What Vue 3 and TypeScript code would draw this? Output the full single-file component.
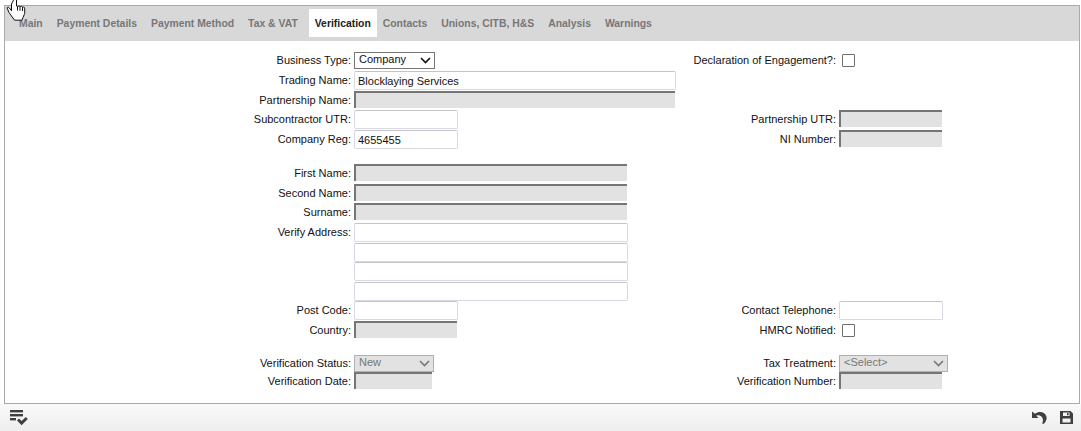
<script setup lang="ts">
type Kind = 'text' | 'off' | 'select' | 'check'

interface Field {
  label?: string
  kind: Kind
  width: number
  value?: string
  disabled?: boolean
}

interface Row {
  height: number
  left?: Field
  right?: Field
}

const tabs = ['Main', 'Payment Details', 'Payment Method', 'Tax & VAT', 'Verification', 'Contacts', 'Unions, CITB, H&S', 'Analysis', 'Warnings']
const activeTab = 'Verification'

const rows: Row[] = [
  {
    height: 19,
    left: { label: 'Business Type', kind: 'select', width: 81, value: 'Company' },
    right: { label: 'Declaration of Engagement?', kind: 'check', width: 13 },
  },
  { height: 20, left: { label: 'Trading Name', kind: 'text', width: 322, value: 'Blocklaying Services' } },
  { height: 19, left: { label: 'Partnership Name', kind: 'off', width: 321 } },
  {
    height: 20,
    left: { label: 'Subcontractor UTR', kind: 'text', width: 104 },
    right: { label: 'Partnership UTR', kind: 'off', width: 103 },
  },
  {
    height: 20,
    left: { label: 'Company Reg', kind: 'text', width: 104, value: '4655455' },
    right: { label: 'NI Number', kind: 'off', width: 103 },
  },
  { height: 14 },
  { height: 20, left: { label: 'First Name', kind: 'off', width: 273 } },
  { height: 19, left: { label: 'Second Name', kind: 'off', width: 273 } },
  { height: 20, left: { label: 'Surname', kind: 'off', width: 273 } },
  { height: 20, left: { label: 'Verify Address', kind: 'text', width: 274 } },
  { height: 19, left: { kind: 'text', width: 274 } },
  { height: 20, left: { kind: 'text', width: 274 } },
  { height: 19, left: { kind: 'text', width: 274 } },
  {
    height: 20,
    left: { label: 'Post Code', kind: 'text', width: 104 },
    right: { label: 'Contact Telephone', kind: 'text', width: 104 },
  },
  {
    height: 19,
    left: { label: 'Country', kind: 'off', width: 103 },
    right: { label: 'HMRC Notified', kind: 'check', width: 13 },
  },
  { height: 15 },
  {
    height: 17,
    left: { label: 'Verification Status', kind: 'select', width: 80, value: 'New', disabled: true },
    right: { label: 'Tax Treatment', kind: 'select', width: 109, value: '<Select>', disabled: true },
  },
  {
    height: 19,
    left: { label: 'Verification Date', kind: 'off', width: 78 },
    right: { label: 'Verification Number', kind: 'off', width: 103 },
  },
]
</script>

<template>
  <div class="page">
    <div class="panel">
      <nav class="tabs">
        <a v-for="tab in tabs" :key="tab" class="tab" :class="{ active: tab === activeTab }">{{ tab }}</a>
      </nav>
      <form class="form">
        <div
          v-for="(row, i) in rows"
          :key="i"
          class="row"
          :class="{ 'row-select': row.left?.kind === 'select' }"
          :style="{ height: row.height + 'px' }"
        >
          <template v-for="(f, side) in { left: row.left, right: row.right }" :key="side">
            <div class="cell" :class="side">
              <template v-if="f">
                <label class="label">{{ f.label ? f.label + ':' : '' }}</label>
                <div v-if="f.kind === 'select'" class="select" :class="{ disabled: f.disabled }" :style="{ width: f.width + 'px' }">
                  <span>{{ f.value }}</span>
                  <svg class="chevron" width="11" height="7" viewBox="0 0 11 7"><path d="M1 1l4.500 4.500L10 1" fill="none" stroke="currentColor" stroke-width="1.6" /></svg>
                </div>
                <input v-else-if="f.kind === 'check'" class="check" type="checkbox">
                <input
                  v-else
                  class="input"
                  :class="{ off: f.kind === 'off' }"
                  type="text"
                  :value="f.value"
                  :disabled="f.kind === 'off'"
                  :style="{ width: f.width + 'px' }"
                >
              </template>
            </div>
          </template>
        </div>
      </form>
    </div>
    <footer class="footer">
      <svg width="18" height="16" viewBox="0 0 18 16" fill="#3f3f3f">
        <rect x="0" y="0" width="13" height="2.4" />
        <rect x="0" y="4" width="13" height="2.4" />
        <rect x="0" y="8" width="6" height="2.4" />
        <path d="M7 10.500l2-2 2.600 2.600L15.800 7l2 2-6.200 6.200z" />
      </svg>
      <div class="footer-right">
        <svg width="15" height="13" viewBox="0 0 15 13" fill="#3f3f3f">
          <path d="M0 .5v6.500h6.500L4.300 4.800C6.800 3.600 10 4.700 10.800 8c.3 1.300.2 2.700-.6 4.800h1.800C14.300 10 15.200 7.500 14.200 5 12.700 1.300 7.500-.5 3 2.800z" />
        </svg>
        <svg width="13" height="13" viewBox="0 0 13 13">
          <path fill-rule="evenodd" fill="#3f3f3f" d="M0 0h10.500L13 2.500V13H0zM3 1.500V5h6.500V1.500zM7 2h1.500v2.300H7zM2.500 7.500V11.500h8V7.500z" />
        </svg>
      </div>
    </footer>
    <svg class="cursor" width="20" height="21" viewBox="0 0 20 21">
      <path fill="#fff" stroke="#111" stroke-width="1" stroke-linejoin="round" d="M8.500-2h2v8l1 .5c1-.5 2-.5 2.500.2 1-.4 2-.3 2.500.4 1-.3 2 0 2.200 1v5.400l-1.700 4-1 2.700H8.500L3 12.500 1 7.800c.5-.8 1.500-.8 2.200 0l2.300 3V4z" />
      <path fill="none" stroke="#111" stroke-width="1" d="M11.500 6.500v4M14 6.700v4M16.500 7.100v4" />
    </svg>
  </div>
</template>

<style>
html, body {
  margin: 0;
  background: #fff;
}
</style>

<style scoped>
.page {
  position: relative;
  width: 1081px;
  height: 431px;
  overflow: hidden;
  font-family: 'Liberation Sans', Arial, sans-serif;
  font-size: 11px;
  color: #111;
  background: #fff;
}

.panel {
  box-sizing: border-box;
  height: 399px;
  margin: 5px 1px 0 4px;
  border: 1px solid #a9a9a9;
}

.tabs {
  display: flex;
  align-items: flex-start;
  box-sizing: border-box;
  height: 35px;
  padding: 3px 0 0 8px;
  background: #d8d8d8;
}

.tab {
  box-sizing: border-box;
  height: 28px;
  padding: 0 6px;
  margin-right: 2px;
  line-height: 30px;
  font-size: 10.4px;
  font-weight: bold;
  color: #777;
}

.tab.active {
  margin: 0 0 0 3px;
  color: #222;
  background: #fff;
}

.form {
  padding-top: 11px;
}

.row {
  display: flex;
}

.cell {
  display: flex;
  flex: none;
  align-items: flex-start;
}

.cell.left {
  width: 485px;
}

.label {
  flex: none;
  box-sizing: border-box;
  width: 349px;
  padding-right: 3px;
  line-height: 18px;
  text-align: right;
  white-space: nowrap;
}

.row-select .label {
  line-height: 16px;
}

.input {
  flex: none;
  box-sizing: border-box;
  height: 19px;
  margin: 0;
  padding: 0 3px;
  border: 1px solid #d9d9e3;
  border-top-color: #c4c4c8;
  border-radius: 2px;
  outline: none;
  background: #fff;
  font: inherit;
  color: #111;
}

.input.off {
  height: 17px;
  border: none;
  border-top: 2px solid #767676;
  border-left: 2px solid #767676;
  border-radius: 0;
  background: #e2e2e2;
}

.select {
  position: relative;
  flex: none;
  box-sizing: border-box;
  height: 17px;
  padding-left: 4px;
  border: 1px solid #767676;
  line-height: 13px;
  color: #111;
  background: #fff;
}

.select.disabled {
  border-color: #b0b0b0;
  background: #e2e2e2;
  color: #777;
}

.chevron {
  position: absolute;
  right: 3px;
  top: 4px;
}

.check {
  flex: none;
  appearance: none;
  box-sizing: border-box;
  width: 13px;
  height: 13px;
  margin: 3px 0 0 3px;
  border: 1px solid #6e6e6e;
  border-radius: 1px;
  background: #fff;
}

.row-select .check {
  margin-top: 2px;
}

.footer {
  display: flex;
  align-items: center;
  justify-content: space-between;
  box-sizing: border-box;
  height: 27px;
  padding: 0 8px 0 10px;
  background: linear-gradient(#f9f9f9, #eeeeee);
}

.footer-right {
  display: flex;
  gap: 13px;
  align-items: center;
}

.cursor {
  position: absolute;
  left: 6px;
  top: 0;
}
</style>
